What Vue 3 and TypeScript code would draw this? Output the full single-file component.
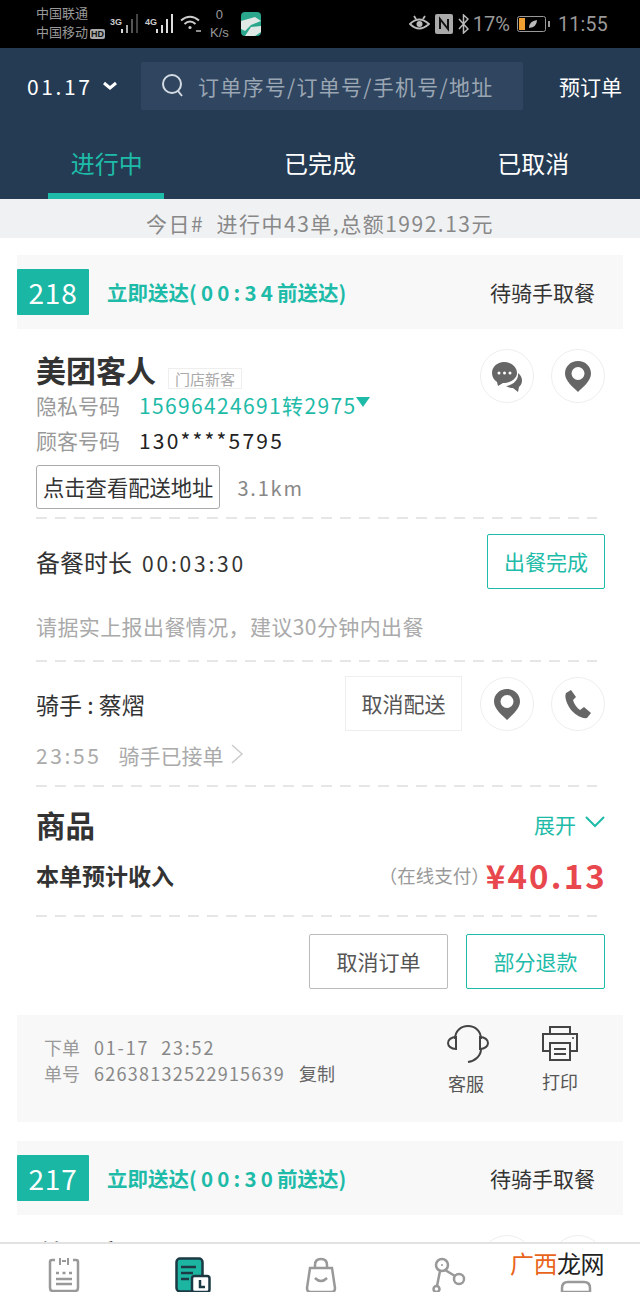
<script setup lang="ts">
const tabs = ['进行中', '已完成', '已取消']
</script>

<template>
  <div class="page">
    <!-- status bar -->
    <div class="status">
      <div class="carriers">
        <div>中国联通</div>
        <div>中国移动<span class="hd">HD</span></div>
      </div>
      <div class="signal">
        <span class="net">3G</span>
        <svg width="20" height="22" viewBox="0 0 20 22">
          <rect x="1" y="16" width="2" height="4" fill="#ddd" />
          <rect x="6" y="12" width="2" height="8" fill="#aaa" />
          <rect x="11" y="6" width="2" height="14" fill="#555" />
          <rect x="16" y="1" width="2" height="19" fill="#444" />
        </svg>
        <span class="net net2">4G</span>
        <svg width="20" height="22" viewBox="0 0 20 22">
          <rect x="1" y="16" width="2" height="4" fill="#ddd" />
          <rect x="6" y="12" width="2" height="8" fill="#ddd" />
          <rect x="11" y="6" width="2" height="14" fill="#ddd" />
          <rect x="16" y="1" width="2" height="19" fill="#ddd" />
        </svg>
        <svg class="wifi" width="24" height="20" viewBox="0 0 24 20" fill="none" stroke="#ccc" stroke-width="2">
          <path d="M2 6.500Q11 -1 20 6.500" />
          <path d="M5.500 10Q11 5 16.500 10" />
          <circle cx="11" cy="13.500" r="1.600" fill="#ccc" stroke="none" />
          <path d="M17 17h5" stroke-width="1.400" />
        </svg>
        <div class="speed"><div>0</div><div>K/s</div></div>
        <svg class="app" width="20" height="24" viewBox="0 0 20 24">
          <rect width="20" height="24" rx="4" fill="#2aa68c" />
          <path d="M0 9 14 5 20 9 10 13 4 19 0 17Z" fill="#dfe8e4" />
          <path d="M4 24 10 15 20 14V20L14 24Z" fill="#dfe8e4" />
        </svg>
      </div>
      <div class="status-right">
        <svg width="21" height="20" viewBox="0 0 21 20" fill="none" stroke="#bbb" stroke-width="1.800">
          <path d="M1 10Q10 1 20 10Q10 19 1 10Z" />
          <circle cx="10.500" cy="10" r="3" fill="#bbb" stroke="none" />
          <path d="M5 2l2 3M16 2l-2 3" />
        </svg>
        <svg width="18" height="20" viewBox="0 0 18 20">
          <rect width="18" height="20" rx="2" fill="#aaa" />
          <path d="M5 15V5l8 10V5" fill="none" stroke="#111" stroke-width="2" />
        </svg>
        <svg width="11" height="20" viewBox="0 0 11 20" fill="none" stroke="#bbb" stroke-width="1.500">
          <path d="M1 5l9 10-4.500 4V1L10 5 1 15" />
        </svg>
        <span class="pct">17%</span>
        <svg class="batt" width="33" height="16" viewBox="0 0 33 16">
          <rect x=".5" y=".5" width="28" height="15" rx="2" fill="none" stroke="#999" />
          <rect x="2" y="2" width="6" height="12" fill="#f0a030" />
          <path d="M12 12Q12 5 20 4Q20 11 12 12Z" fill="#bbb" />
          <rect x="31" y="5" width="2" height="6" fill="#999" />
        </svg>
        <span class="clock">11:55</span>
      </div>
    </div>

    <!-- header -->
    <header class="header">
      <div class="search-row">
        <div class="date">01.17
          <svg width="14" height="10" viewBox="0 0 14 10" fill="none" stroke="#fff" stroke-width="3">
            <path d="M1 2l6 5 6-5" />
          </svg>
        </div>
        <div class="search">
          <svg width="24" height="26" viewBox="0 0 24 26" fill="none" stroke="#d5dbe2" stroke-width="2">
            <circle cx="11" cy="11" r="9" />
            <path d="M17 18l4 5" />
          </svg>
          <span>订单序号/订单号/手机号/地址</span>
        </div>
        <div class="preorder">预订单</div>
      </div>
      <nav class="tabs">
        <div v-for="(t, i) in tabs" :key="t" class="tab" :class="{ active: i === 0 }">{{ t }}</div>
      </nav>
    </header>

    <div class="summary">今日# &nbsp;进行中43单,总额1992.13元</div>

    <main class="content">
      <section class="order-head">
        <div class="badge">218</div>
        <div class="deliver">立即送达<span class="wide">(00:34</span>前送达<span class="wide">)</span></div>
        <div class="state">待骑手取餐</div>
      </section>

      <section class="customer">
        <div class="cust-info">
          <div class="name-row"><b>美团客人</b><span class="tag">门店新客</span></div>
          <div class="phone-row"><span class="lbl">隐私号码</span><span class="num green">15696424691转2975</span><i class="tri"></i></div>
          <div class="phone-row second"><span class="lbl">顾客号码</span><span class="num plain">130****5795</span></div>
          <div class="addr-row"><span class="addr">点击查看配送地址</span><span class="dist">3.1km</span></div>
        </div>
        <div class="circles">
          <div class="circle">
            <svg width="32" height="32" viewBox="0 0 32 32" fill="#666">
              <path d="M13 1C6 1 1 6 1 12c0 4 2 7 5 9l1 4 5-3c7 0 14-4 14-10C26 6 20 1 13 1Z" />
              <path d="M27 12c3 2 4 5 4 8 0 3-2 5-3 6l-1 5-5-4c-3 0-5-1-7-2 7-1 13-6 12-13Z" />
              <circle cx="8" cy="12" r="1.500" fill="#fff" />
              <circle cx="13.500" cy="12" r="1.500" fill="#fff" />
              <circle cx="19" cy="12" r="1.500" fill="#fff" />
            </svg>
          </div>
          <div class="circle">
            <svg width="28" height="32" viewBox="0 0 28 32">
              <path d="M14 1C6.500 1 1 6.500 1 13.500 1 21 9 27 14 32c5-5 13-11 13-18.500C27 6.500 21.500 1 14 1Z" fill="#666" />
              <circle cx="14" cy="13.500" r="6.500" fill="#fff" />
            </svg>
          </div>
        </div>
      </section>
      <div class="dash"></div>

      <section class="block meal">
        <div class="meal-row">
          <div class="meal-time">备餐时长<span class="mono">00:03:30</span></div>
          <div class="done-btn">出餐完成</div>
        </div>
        <div class="hint">请据实上报出餐情况，建议30分钟内出餐</div>
      </section>
      <div class="dash"></div>

      <section class="block rider">
        <div class="rider-row">
          <div class="rider-name">骑手 : 蔡熠</div>
          <div class="cancel-delivery">取消配送</div>
          <div class="circle">
            <svg width="28" height="32" viewBox="0 0 28 32">
              <path d="M14 1C6.500 1 1 6.500 1 13.500 1 21 9 27 14 32c5-5 13-11 13-18.500C27 6.500 21.500 1 14 1Z" fill="#666" />
              <circle cx="14" cy="13.500" r="6.500" fill="#fff" />
            </svg>
          </div>
          <div class="circle">
            <svg width="28" height="30" viewBox="0 0 28 30" fill="#666">
              <path d="M7 1 2 4C0 8 3 16 8 22c4 4 10 8 15 7l4-5-7-6-4 3c-3-2-6-6-7-10l3-3Z" />
            </svg>
          </div>
        </div>
        <div class="rider-log">
          <span class="mono">23:55</span><span>骑手已接单</span>
          <svg width="14" height="20" viewBox="0 0 14 20" fill="none" stroke="#ccc" stroke-width="1.500">
            <path d="M2 1l10 9-10 9" />
          </svg>
        </div>
      </section>
      <div class="dash"></div>

      <section class="block goods">
        <div class="goods-row">
          <b>商品</b>
          <div class="expand">展开
            <svg width="20" height="12" viewBox="0 0 20 12" fill="none" stroke="#1dbba8" stroke-width="2">
              <path d="M1 1l9 9 9-9" />
            </svg>
          </div>
        </div>
        <div class="income-row">
          <b>本单预计收入</b>
          <span class="pay">（在线支付）</span>
          <span class="price">¥40.13</span>
        </div>
      </section>
      <div class="dash"></div>

      <section class="block actions">
        <div class="act">取消订单</div>
        <div class="act act-green">部分退款</div>
      </section>

      <section class="foot">
        <div class="foot-info">
          <div>下单<span class="mono date-time">01-17<span class="gap">23:52</span></span></div>
          <div>单号<span class="mono">62638132522915639</span><span class="copy">复制</span></div>
        </div>
        <div class="foot-btn kefu">
          <svg width="42" height="38" viewBox="0 0 42 38" fill="none" stroke="#444" stroke-width="2">
            <path d="M8 14C8 6 14 1 21 1s13 5 13 13" />
            <path d="M9 12C4 12 1 15 1 18s3 6 8 6Z" />
            <path d="M33 12c5 0 8 3 8 6s-3 6-8 6Z" />
            <path d="M34 24c0 7-6 12-13 13" />
          </svg>
          <span>客服</span>
        </div>
        <div class="foot-btn">
          <svg width="38" height="36" viewBox="0 0 38 36" fill="none" stroke="#444" stroke-width="2">
            <path d="M9 9V2h20v7" />
            <path d="M9 26H2V9h34v17h-7" />
            <rect x="9" y="18" width="20" height="17" />
            <path d="M13 24h12M13 29h12" />
            <circle cx="32" cy="13" r="1" fill="#444" stroke="none" />
          </svg>
          <span>打印</span>
        </div>
      </section>

      <section class="order-head second-order">
        <div class="badge">217</div>
        <div class="deliver">立即送达<span class="wide">(00:30</span>前送达<span class="wide">)</span></div>
        <div class="state">待骑手取餐</div>
      </section>

      <section class="customer next">
        <div class="cust-info">
          <div class="name-row"><b>美团客人</b></div>
        </div>
        <div class="circles">
          <div class="circle"></div>
          <div class="circle"></div>
        </div>
      </section>
    </main>

    <!-- bottom tab bar -->
    <footer class="tabbar">
      <svg width="32" height="36" viewBox="0 0 32 36" fill="none" stroke="#999" stroke-width="2.500">
        <path d="M7 3H4Q2 3 2 5v26q0 3 3 3h22q3 0 3-3V5q0-2-2-2h-3" />
        <path d="M12 1v7M20 1v7M14 4h4" stroke-width="2" />
        <path d="M8 16h3M14.500 16h3M21 16h3" />
        <path d="M8 22h16M8 27h16" />
      </svg>
      <svg width="36" height="36" viewBox="0 0 36 36">
        <rect x="1.500" y="1.500" width="26" height="33" rx="3.500" fill="#1cb5a2" stroke="#1d3a44" stroke-width="2.500" />
        <path d="M6 10h15M6 16h12M6 22h8" stroke="#1d3a44" stroke-width="2.500" />
        <rect x="17" y="19" width="17.500" height="16" rx="2.500" fill="#fff" stroke="#1d3a44" stroke-width="2.500" />
        <path d="M25 23v7h5" fill="none" stroke="#1d3a44" stroke-width="2.500" />
      </svg>
      <svg width="32" height="36" viewBox="0 0 32 36" fill="none" stroke="#999" stroke-width="2.500">
        <path d="M5 11h22l3 20q0 4-3 4H5q-3 0-3-4Z" />
        <path d="M10 11V8q0-6 6-6t6 6v3" />
        <path d="M10 21q6 6 12 0" />
      </svg>
      <svg width="34" height="36" viewBox="0 0 34 36" fill="none" stroke="#999" stroke-width="2.500">
        <circle cx="10" cy="8" r="6" />
        <circle cx="10" cy="8" r="1" fill="#999" stroke="none" />
        <circle cx="27" cy="22" r="5" />
        <circle cx="4.500" cy="32" r="3" />
        <path d="M13 13l10 6M8 14 5 29" />
      </svg>
      <svg class="me" width="32" height="36" viewBox="0 0 32 36" fill="none" stroke="#999" stroke-width="2.500">
        <path d="M2 35v-4q0-6 6-6h16q6 0 6 6v4Z" />
      </svg>
      <div class="watermark"><span>广西</span>龙网</div>
    </footer>
  </div>
</template>

<style>
html,
body {
  margin: 0;
  background: #fff;
}
</style>

<style scoped>
.page {
  width: 640px;
  height: 1292px;
  overflow: hidden;
  display: flex;
  flex-direction: column;
  font-family: "Noto Sans CJK SC", "Noto Sans", sans-serif;
  color: #333;
  background: #fff;
}

.status {
  height: 48px;
  flex: none;
  background: #000;
  display: flex;
  align-items: center;
  padding: 0 32px 0 36px;
  color: #999;
  box-sizing: border-box;
}
.carriers {
  font-size: 13px;
  line-height: 19px;
  width: 72px;
  margin-top: -2px;
  white-space: nowrap;
}
.hd {
  background: #aaa;
  color: #111;
  font-size: 9px;
  font-weight: 700;
  padding: 0 1px;
  border-radius: 2px;
  margin-left: 2px;
  font-family: "Liberation Sans", sans-serif;
}
.signal {
  display: flex;
  align-items: center;
  margin-left: 2px;
}
.net {
  font-size: 9px;
  color: #ccc;
  align-self: flex-start;
  margin-top: 11px;
  margin-right: -2px;
  font-weight: 700;
  font-family: "Liberation Sans", sans-serif;
}
.net2 {
  margin-left: 5px;
}
.wifi {
  margin-left: 4px;
}
.speed {
  font-size: 13px;
  line-height: 18px;
  text-align: center;
  margin-left: 7px;
  font-family: "Liberation Sans", sans-serif;
}
.app {
  margin-left: 12px;
}
.status-right {
  margin-left: auto;
  display: flex;
  align-items: center;
  gap: 5px;
}
.pct,
.clock {
  font-family: "Roboto", sans-serif;
  color: #999;
}
.pct {
  font-size: 20px;
  margin-left: -1px;
}
.batt {
  margin-left: 2px;
}
.clock {
  margin-left: 3px;
  letter-spacing: 0.3px;
  font-size: 19.500px;
}

.header {
  height: 151px;
  flex: none;
  background: #243b53;
  box-sizing: border-box;
  padding-top: 14px;
}
.search-row {
  height: 48px;
  display: flex;
  align-items: center;
}
.date {
  width: 141px;
  padding-left: 27px;
  box-sizing: border-box;
  color: #fff;
  font-size: 21px;
  letter-spacing: 2.600px;
  display: flex;
  align-items: center;
  gap: 11px;
}
.search {
  width: 382px;
  height: 48px;
  background: #2f4560;
  border-radius: 2px;
  display: flex;
  align-items: center;
  padding-left: 20px;
  box-sizing: border-box;
  gap: 13px;
  color: #9ba6b3;
  font-size: 21px;
  letter-spacing: 1.250px;
  white-space: nowrap;
}
.preorder {
  margin-left: 36px;
  color: #fff;
  font-size: 21px;
  white-space: nowrap;
}
.tabs {
  display: flex;
  margin-top: 28px;
}
.tab {
  flex: 1;
  height: 61px;
  box-sizing: border-box;
  padding-top: 8px;
  text-align: center;
  color: #fff;
  font-size: 24px;
  line-height: 34px;
}
.tab.active {
  color: #1dbba8;
  position: relative;
}
.tab.active::after {
  content: "";
  position: absolute;
  left: 48px;
  bottom: 0;
  width: 116px;
  height: 6px;
  background: #1dbba8;
}

.summary {
  height: 39px;
  flex: none;
  background: #f0f1f3;
  text-align: center;
  color: #888;
  font-size: 21px;
  line-height: 48px;
  letter-spacing: 1.500px;
  overflow: hidden;
}

.content {
  flex: 1;
  min-height: 0;
  overflow: hidden;
  padding: 17px 17px 0;
}

.order-head {
  height: 74px;
  background: #f8f8f8;
  display: flex;
  align-items: center;
  padding-right: 28px;
}
.badge {
  width: 72px;
  height: 46px;
  background: #1ab7a4;
  border-radius: 1px;
  color: #fff;
  font-size: 28px;
  line-height: 46px;
  text-align: center;
  letter-spacing: 0.8px;
}
.deliver {
  margin-left: 18px;
  color: #1dbba8;
  font-size: 20.500px;
  font-weight: 700;
}
.wide {
  letter-spacing: 4.200px;
}
.state {
  margin-left: auto;
  font-size: 21px;
  color: #333;
}

.customer {
  display: flex;
  justify-content: space-between;
  padding: 19px 18px 0 19px;
  height: 188px;
  box-sizing: border-box;
}
.circles {
  display: flex;
  gap: 17px;
  margin-top: 1px;
}
.name-row {
  display: flex;
  align-items: flex-start;
  height: 44px;
}
.next .name-row {
  margin-top: -1px;
}
.name-row b {
  font-size: 30px;
  line-height: 42px;
  color: #333;
}
.tag {
  border: 1px solid #eee;
  color: #aaa;
  font-size: 15px;
  line-height: 19px;
  padding: 0 6px;
  margin: 20px 0 0 12px;
}
.phone-row {
  display: flex;
  align-items: center;
  height: 34px;
  margin-top: -4px;
}
.phone-row.second {
  margin-top: 1px;
}
.lbl {
  color: #999;
  font-size: 21px;
  width: 103px;
}
.num {
  font-size: 21px;
  letter-spacing: 1.350px;
  color: #222;
}
.plain {
  letter-spacing: 2.200px;
}
.green {
  color: #1dbba8;
}
.tri {
  width: 0;
  height: 0;
  border-left: 7px solid transparent;
  border-right: 7px solid transparent;
  border-top: 10px solid #1dbba8;
  margin: -6px 0 0 0;
}
.addr-row {
  display: flex;
  align-items: center;
  margin-top: 8px;
}
.addr {
  border: 1px solid #aaa;
  border-radius: 3px;
  height: 44px;
  box-sizing: border-box;
  line-height: 42px;
  padding: 0 6px;
  font-size: 21.300px;
  color: #333;
}
.dist {
  margin-left: 17px;
  font-size: 20px;
  letter-spacing: 1.800px;
  color: #888;
}
.circle {
  width: 54px;
  height: 54px;
  flex: none;
  border: 1px solid #eee;
  border-radius: 50%;
  box-sizing: border-box;
  display: flex;
  align-items: center;
  justify-content: center;
}
.circles .circle:first-child svg {
  margin-top: 2px;
}

.dash {
  height: 2px;
  margin: 0 26px 0 19px;
  background: repeating-linear-gradient(90deg, #e6e6e6 0 11px, transparent 11px 19px);
}

.block {
  padding: 0 18px 0 19px;
}
.meal {
  height: 141px;
}
.meal-row {
  display: flex;
  align-items: center;
  justify-content: space-between;
  padding-top: 15px;
}
.meal-time {
  font-size: 24px;
  color: #333;
}
.mono {
  letter-spacing: 2.800px;
  margin-left: 10px;
  font-size: 21px;
  color: inherit;
}
.done-btn {
  width: 118px;
  height: 55px;
  line-height: 53px;
  border: 1px solid #1dbba8;
  border-radius: 2px;
  text-align: center;
  box-sizing: border-box;
  color: #1dbba8;
  font-size: 21px;
}
.hint {
  margin-top: 22px;
  color: #aaa;
  font-size: 21px;
  letter-spacing: 0.4px;
  line-height: 30px;
}

.rider {
  height: 123px;
}
.rider-row {
  display: flex;
  align-items: center;
  padding-top: 14px;
}
.rider-name {
  font-size: 23px;
  margin-right: auto;
  color: #333;
}
.cancel-delivery {
  width: 117px;
  height: 55px;
  line-height: 53px;
  border: 1px solid #eee;
  box-sizing: border-box;
  text-align: center;
  font-size: 21px;
  color: #555;
  margin-right: 18px;
}
.rider-row .circle + .circle {
  margin-left: 17px;
}
.rider-log {
  margin-top: 9px;
  color: #aaa;
  font-size: 21px;
  display: flex;
  align-items: center;
  line-height: 30px;
}
.rider-log .mono {
  margin: 0 17px 0 0;
  letter-spacing: 2.600px;
}
.rider-log svg {
  margin-left: 7px;
  margin-top: -3px;
}

.goods {
  height: 128px;
}
.goods-row {
  display: flex;
  align-items: center;
  justify-content: space-between;
  padding-top: 15px;
  line-height: 44px;
}
.goods-row b {
  font-size: 29.500px;
  color: #333;
}
.expand {
  color: #1dbba8;
  font-size: 21px;
  display: flex;
  align-items: center;
  gap: 9px;
}
.expand svg {
  margin-top: -4px;
}
.income-row {
  display: flex;
  align-items: center;
  margin-top: 9px;
  line-height: 40px;
}
.income-row b {
  font-size: 23px;
  color: #333;
  margin-right: auto;
}
.pay {
  color: #999;
  font-size: 18.500px;
}
.price {
  color: #e8484d;
  font-size: 33px;
  font-weight: 700;
  letter-spacing: 2.200px;
  margin-right: -2px;
  margin-left: -4px;
}

.actions {
  height: 98px;
  display: flex;
  justify-content: flex-end;
  align-items: flex-start;
  gap: 18px;
  padding-top: 17px;
  box-sizing: border-box;
}
.act {
  width: 139px;
  height: 55px;
  line-height: 53px;
  box-sizing: border-box;
  text-align: center;
  border: 1px solid #bbb;
  border-radius: 2px;
  font-size: 21px;
  color: #555;
}
.act-green {
  border-color: #1dbba8;
  color: #1dbba8;
}

.foot {
  height: 107px;
  background: #f8f8f8;
  display: flex;
  align-items: flex-start;
  box-sizing: border-box;
  padding: 10px 0 0 27px;
}
.foot-info {
  margin-top: 9px;
  font-size: 18px;
  line-height: 26px;
  color: #999;
  margin-right: auto;
  white-space: nowrap;
}
.foot-info .mono {
  font-size: 18px;
  letter-spacing: 1.250px;
  margin-left: 14px;
  color: #888;
}
.foot-info .date-time {
  letter-spacing: 1.800px;
}
.gap {
  margin-left: 12px;
}
.copy {
  margin-left: 14px;
  color: #666;
}
.foot-btn {
  width: 76px;
  display: flex;
  flex-direction: column;
  align-items: center;
  color: #555;
  font-size: 18px;
  line-height: 26px;
  margin-right: 25px;
  gap: 7px;
}
.kefu {
  margin-right: 18px;
}
.kefu svg {
  margin-left: 4px;
}

.second-order {
  margin-top: 19px;
}

.tabbar {
  height: 50px;
  flex: none;
  position: relative;
  box-sizing: border-box;
  background: #fff;
  border-top: 2px solid #e2e2e2;
  display: flex;
  justify-content: space-between;
  padding: 13px 48px 0;
  overflow: hidden;
}
.watermark {
  position: absolute;
  left: 510px;
  top: 3px;
  font-size: 24px;
  line-height: 32px;
  color: #222;
  letter-spacing: -0.500px;
}
.watermark span {
  color: #e8641c;
}
</style>
